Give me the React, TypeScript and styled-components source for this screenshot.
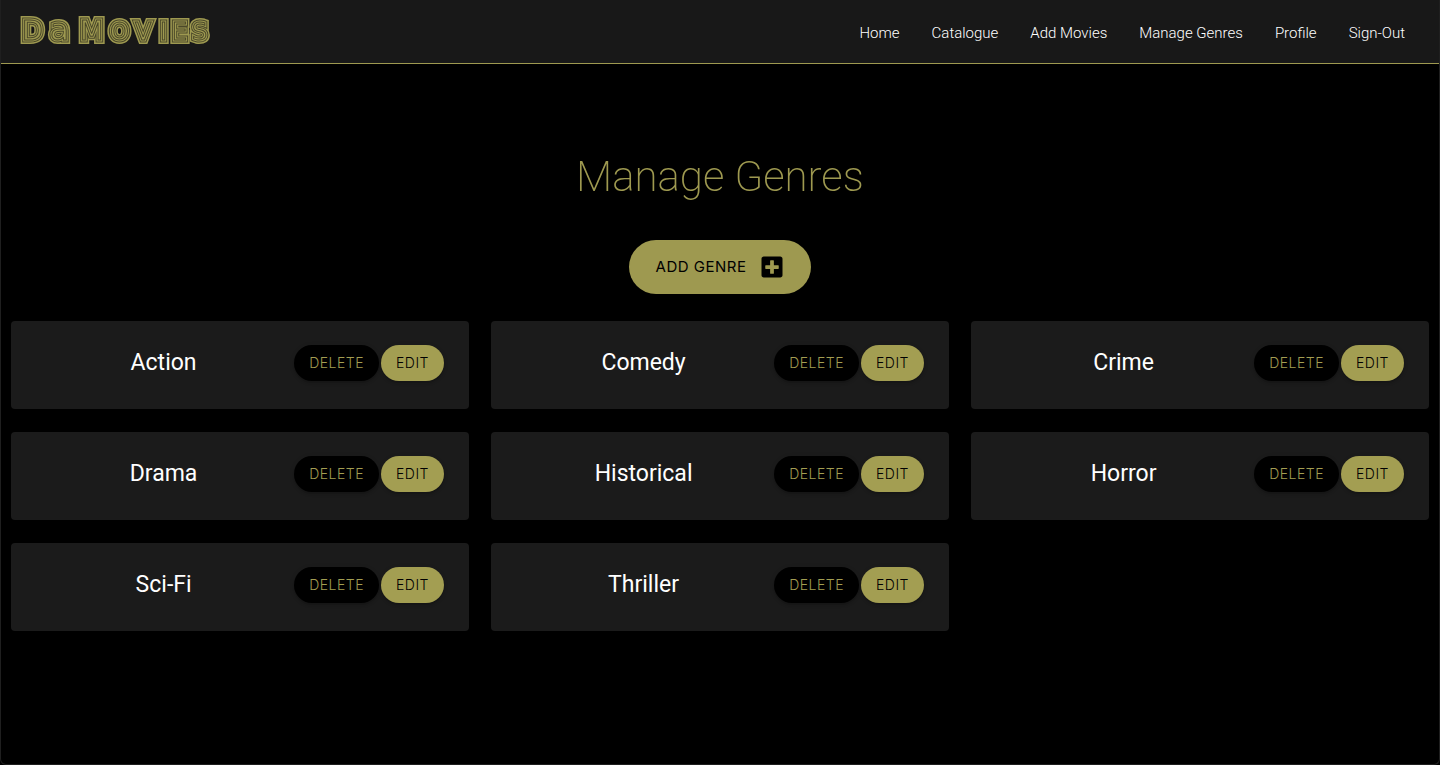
import React from "react";
import styled, { createGlobalStyle } from "styled-components";
import { FaPlusSquare } from "react-icons/fa";

const gold = "#9e9950";

const GlobalStyle = createGlobalStyle`
  *, *::before, *::after { box-sizing: border-box; }
  html { background: #000; }
  body {
    margin: 0;
    background: #000;
    color: #fff;
    font-family: Roboto, "Liberation Sans", sans-serif;
    font-size: 15px;
  }
`;

const Page = styled.div`
  min-height: 100vh;
  border: solid #1f1f1f;
  border-width: 0 1px 1px;
  border-radius: 0 0 6px 6px;
`;

const NavBar = styled.nav`
  display: flex;
  justify-content: space-between;
  align-items: center;
  height: 64px;
  padding: 0 18px 0 15px;
  background: #181818;
  border-bottom: 1px solid ${gold};
`;

const Brand = styled.a`
  display: block;
  height: 40px;
  will-change: transform;
`;

const NavList = styled.ul`
  display: flex;
  margin: 0;
  padding: 0;
  list-style: none;
`;

const NavLink = styled.a`
  display: block;
  padding: 2px 16px 0;
  color: #fff;
  font-weight: 300;
  line-height: 60px;
  text-decoration: none;
`;

const Main = styled.main`
  display: flex;
  flex-direction: column;
  align-items: center;
  padding: 84px 10px 40px;
`;

const Title = styled.h1`
  margin: 0 0 34px;
  color: ${gold};
  font-size: 42px;
  font-weight: 200;
  line-height: 58px;
  will-change: transform;
`;

const AddButton = styled.button`
  display: flex;
  align-items: center;
  gap: 14px;
  height: 54px;
  padding: 0 27px;
  border: 0;
  border-radius: 27px;
  background: ${gold};
  color: #000;
  font: 400 15px/54px Inter, "Liberation Sans", sans-serif;
  letter-spacing: 0.5px;
  text-transform: uppercase;
  cursor: pointer;
`;

const Genres = styled.ul`
  display: grid;
  grid-template-columns: repeat(3, 1fr);
  gap: 23px 22px;
  width: 100%;
  margin: 27px 0 0;
  padding: 0;
  list-style: none;
`;

const Card = styled.li`
  display: grid;
  grid-template-columns: 2fr 1fr;
  align-items: start;
  padding: 24px 25px 24px 22px;
  height: 88px;
  border-radius: 4px;
  background: #1b1b1b;
`;

const GenreName = styled.h2`
  margin: 0;
  font-size: 23px;
  font-weight: 400;
  line-height: 36px;
  text-align: center;
`;

const Actions = styled.div`
  display: flex;
  justify-content: flex-end;
  gap: 2px;
`;

const Action = styled.button<{ $filled?: boolean }>`
  height: 36px;
  padding: 0 15px;
  border: 0;
  border-radius: 18px;
  background: ${(p) => (p.$filled ? "#a39e52" : "#000")};
  color: ${(p) => (p.$filled ? "#000" : "#a39e52")};
  font: 300 14px/36px Inter, "Liberation Sans", sans-serif;
  letter-spacing: 0.5px;
  text-transform: uppercase;
  box-shadow: 0 2px 2px rgba(0, 0, 0, 0.14), 0 1px 5px rgba(0, 0, 0, 0.12);
  cursor: pointer;
`;

const links = ["Home", "Catalogue", "Add Movies", "Manage Genres", "Profile", "Sign-Out"];
const genres = ["Action", "Comedy", "Crime", "Drama", "Historical", "Horror", "Sci-Fi", "Thriller"];

/* Each layer strokes the same word a little thinner, which leaves concentric lines. */
const layers = [
  { width: 8, color: gold },
  { width: 5, color: "#4a4829" },
  { width: 3, color: gold },
  { width: 1, color: "#4a4829" },
];

function Logo() {
  return (
    <svg width="200" height="40" viewBox="0 0 200 40" aria-hidden="true">
      <defs>
        <g id="wordmark" fontFamily="DejaVu Sans" strokeLinejoin="miter" strokeMiterlimit="2">
          <text y="28" fontSize="27" x="6 64">DM</text>
          <text y="28" fontSize="31" x="34">a</text>
          <text y="28" fontSize="24" x="94 119 144 156 176">OVIES</text>
        </g>
      </defs>
      {layers.map((l) => (
        <use key={l.width} href="#wordmark" fill={gold} stroke={l.color} strokeWidth={l.width} />
      ))}
    </svg>
  );
}

export default function App() {
  return (
    <>
      <GlobalStyle />
      <Page>
        <NavBar>
          <Brand href="#" aria-label="Da Movies"><Logo /></Brand>
          <NavList>
            {links.map((l) => (
              <li key={l}><NavLink href="#">{l}</NavLink></li>
            ))}
          </NavList>
        </NavBar>
        <Main>
          <Title>Manage Genres</Title>
          <AddButton type="button">Add Genre <FaPlusSquare size={24} /></AddButton>
          <Genres>
            {genres.map((g) => (
              <Card key={g}>
                <GenreName>{g}</GenreName>
                <Actions>
                  <Action type="button">Delete</Action>
                  <Action type="button" $filled>Edit</Action>
                </Actions>
              </Card>
            ))}
          </Genres>
        </Main>
      </Page>
    </>
  );
}
